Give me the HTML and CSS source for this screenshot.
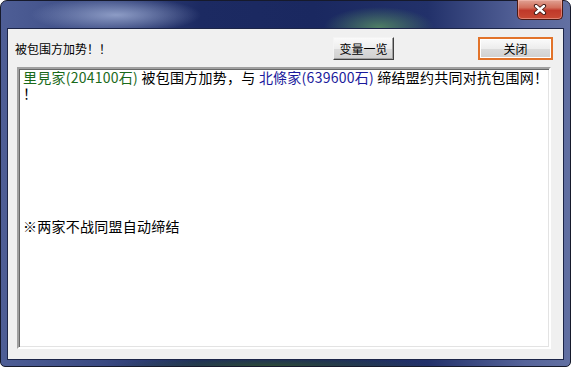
FILE: index.html
```html
<!DOCTYPE html>
<html>
<head>
    <title>被包围方加势</title>
    <link rel="stylesheet" href="styles.css">
</head>
<body>
    <div class="window">
        <div class="titlebar">
            <button class="close-btn">
                <svg width="14" height="11" viewBox="0 0 14 11">
                    <path d="M3 2 L11 9 M11 2 L3 9" stroke="#3a1410" stroke-width="4.2" stroke-linecap="round"/>
                    <path d="M3 2 L11 9 M11 2 L3 9" stroke="#ffffff" stroke-width="2.4" stroke-linecap="round"/>
                </svg>
            </button>
        </div>
        <div class="client">
            <div class="toolbar">
                <span class="caption">被包围方加势！！</span>
                <button class="btn btn-list">变量一览</button>
                <button class="btn btn-close">关闭</button>
            </div>
            <div class="message">
                <div class="line"><span class="clan-a">里見家(204100石)</span> 被包围方加势，与 <span class="clan-b">北條家(639600石)</span> 缔结盟约共同对抗包围网！</div>
                <div class="line">！</div>
                <div class="line note">※两家不战同盟自动缔结</div>
            </div>
        </div>
    </div>
</body>
</html>
```
FILE: styles.css
```css
body { margin: 0; background: #ffffff; font-family: "Noto Sans CJK SC", "Liberation Sans", sans-serif; }

.window {
    width: 571px;
    height: 367px;
    box-sizing: border-box;
    display: flex;
    flex-direction: column;
    padding: 0 7px 7px 7px;
    border: 1px solid #161a2c;
    border-radius: 7px 7px 5px 5px;
    background:
        radial-gradient(ellipse 55px 20px at 378px 26px, rgba(80, 130, 100, 0.95), rgba(80, 130, 100, 0) 100%),
        radial-gradient(ellipse 85px 18px at 115px 14px, rgba(150, 165, 205, 0.9), rgba(150, 165, 205, 0) 100%),
        radial-gradient(ellipse 160px 9px at 270px 100%, rgba(45, 75, 55, 1), rgba(45, 75, 55, 0) 100%),
        linear-gradient(to right, #4e5e96 0, #3a4a82 18%, #1c2a62 35%, #1a2860 55%, #22316a 75%, #56649a 92%, #6270a2 100%);
}

.titlebar {
    height: 28px;
    display: flex;
    justify-content: flex-end;
    align-items: flex-start;
}

.close-btn {
    width: 46px;
    height: 20px;
    margin-top: -1px;
    padding: 0;
    border: 1px solid #4a1a14;
    border-top: none;
    border-radius: 0 0 5px 5px;
    background: linear-gradient(#e0a294 0%, #d26f5c 40%, #c0392a 55%, #c84a34 100%);
    box-shadow: inset 0 0 0 1px rgba(255, 200, 190, 0.45);
    display: flex;
    align-items: center;
    justify-content: center;
}

.client {
    flex: 1;
    display: flex;
    flex-direction: column;
    background: #f0f0f0;
    box-shadow: 0 0 0 1px #1c2548;
}

.toolbar {
    height: 38px;
    display: flex;
    align-items: center;
    padding: 0 10px 0 7px;
}

.caption { flex: 1; font-size: 12px; color: #000; }

.btn {
    height: 23px;
    padding: 0;
    font-family: "Noto Sans CJK SC", sans-serif;
    font-size: 12px;
    color: #000;
    background: linear-gradient(#fafafa 0%, #ededed 50%, #dcdcdc 51%, #d0d0d0 100%);
}

.btn-list {
    width: 61px;
    margin-right: 84px;
    border: 1px solid;
    border-color: #f4f4f4 #404040 #404040 #f4f4f4;
    box-shadow: inset -1px -1px 0 #a0a0a0;
}

.btn-close {
    width: 75px;
    border: 2px solid #e2732a;
    box-shadow: inset 0 0 0 1px #ffffff;
}

.message {
    flex: 1;
    margin: 0 12px 10px 9px;
    padding: 0 4px;
    background: #ffffff;
    border: 2px solid;
    border-color: #a0a0a0 #ffffff #ffffff #a0a0a0;
    box-shadow: inset 1px 1px 0 #696969, inset -1px -1px 0 #e3e3e3;
    font-size: 14px;
    line-height: 16px;
    letter-spacing: 0.25px;
    color: #000;
}

.line { white-space: nowrap; }
.clan-a { color: #1a6a1a; }
.clan-b { color: #1a1a9c; }
.note { margin-top: 117px; }
```
